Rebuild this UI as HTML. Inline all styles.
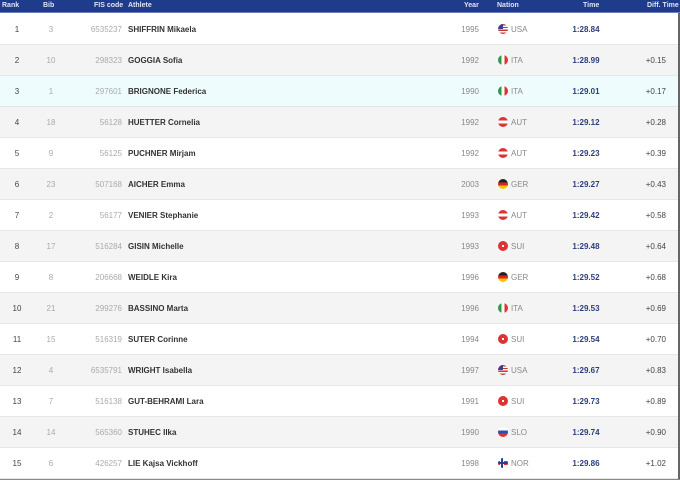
<!DOCTYPE html>
<html><head><meta charset="utf-8"><style>
*{margin:0;padding:0;box-sizing:border-box}
body{width:680px;height:480px;overflow:hidden;background:#fff;font-family:"Liberation Sans",Arial,sans-serif;font-size:8px;position:relative}
.hd{position:absolute;left:0;top:0;width:680px;height:13px;background:#1f3b8c;color:#dfe6f5;font-weight:bold;font-size:7px;border-bottom:1px solid #6b7fb8}
.hd span,.r span{position:absolute;top:0;white-space:nowrap}
.hd span{line-height:11px}
.r{position:absolute;left:0;width:679px;height:31px;border-bottom:1px solid #e6e6e6}
.r span{line-height:31px}
.r:nth-of-type(odd){background:#f4f4f4}
.rk{left:0;width:34px;text-align:center;color:#444}
.bib{left:36px;width:30px;text-align:center;color:#aaa}
.fis{right:557px;color:#aaa}
.ath{left:128px;color:#333;font-weight:bold}
.yr{right:200px;color:#888}
.fl{left:498px;top:10px!important;width:10px;height:10px;border-radius:50%;overflow:hidden;display:block}
.nat{left:511px;color:#888}
.tm{left:560px;width:52px;text-align:center;color:#2a3f7a;font-weight:bold}
.df{right:13px;color:#444}
.edge{position:absolute;right:0;top:13px;width:2px;height:467px;background:#666}
.edgeb{position:absolute;left:0;bottom:0;width:680px;height:1px;background:#888}
</style></head><body>
<div class="hd"><span style="left:2px">Rank</span><span style="left:43px">Bib</span><span style="left:94px">FIS code</span><span style="left:128px">Athlete</span><span style="left:464px">Year</span><span style="left:497px">Nation</span><span style="left:583px">Time</span><span style="left:647px">Diff. Time</span></div>

<div class="r" style="top:14px"><span class="rk">1</span><span class="bib">3</span><span class="fis">6535237</span><span class="ath">SHIFFRIN Mikaela</span><span class="yr">1995</span><span class="fl" style="background:repeating-linear-gradient(#c33 0 1.4px,#fff 1.4px 2.8px)"><i style="display:block;width:5px;height:5px;background:#3a3f8f"></i></span><span class="nat">USA</span><span class="tm">1:28.84</span><span class="df"></span></div>
<div class="r" style="top:45px"><span class="rk">2</span><span class="bib">10</span><span class="fis">298323</span><span class="ath">GOGGIA Sofia</span><span class="yr">1992</span><span class="fl" style="background:linear-gradient(90deg,#2a9a4a 33%,#fff 33% 66%,#d33 66%)"></span><span class="nat">ITA</span><span class="tm">1:28.99</span><span class="df">+0.15</span></div>
<div class="r" style="top:76px;background:#effcfd"><span class="rk">3</span><span class="bib">1</span><span class="fis">297601</span><span class="ath">BRIGNONE Federica</span><span class="yr">1990</span><span class="fl" style="background:linear-gradient(90deg,#2a9a4a 33%,#fff 33% 66%,#d33 66%)"></span><span class="nat">ITA</span><span class="tm">1:29.01</span><span class="df">+0.17</span></div>
<div class="r" style="top:107px"><span class="rk">4</span><span class="bib">18</span><span class="fis">56128</span><span class="ath">HUETTER Cornelia</span><span class="yr">1992</span><span class="fl" style="background:linear-gradient(#d33 35%,#fff 35% 65%,#d33 65%)"></span><span class="nat">AUT</span><span class="tm">1:29.12</span><span class="df">+0.28</span></div>
<div class="r" style="top:138px"><span class="rk">5</span><span class="bib">9</span><span class="fis">56125</span><span class="ath">PUCHNER Mirjam</span><span class="yr">1992</span><span class="fl" style="background:linear-gradient(#d33 35%,#fff 35% 65%,#d33 65%)"></span><span class="nat">AUT</span><span class="tm">1:29.23</span><span class="df">+0.39</span></div>
<div class="r" style="top:169px"><span class="rk">6</span><span class="bib">23</span><span class="fis">507168</span><span class="ath">AICHER Emma</span><span class="yr">2003</span><span class="fl" style="background:linear-gradient(#222 33%,#d22 33% 66%,#f5c400 66%)"></span><span class="nat">GER</span><span class="tm">1:29.27</span><span class="df">+0.43</span></div>
<div class="r" style="top:200px"><span class="rk">7</span><span class="bib">2</span><span class="fis">56177</span><span class="ath">VENIER Stephanie</span><span class="yr">1993</span><span class="fl" style="background:linear-gradient(#d33 35%,#fff 35% 65%,#d33 65%)"></span><span class="nat">AUT</span><span class="tm">1:29.42</span><span class="df">+0.58</span></div>
<div class="r" style="top:231px"><span class="rk">8</span><span class="bib">17</span><span class="fis">516284</span><span class="ath">GISIN Michelle</span><span class="yr">1993</span><span class="fl" style="background:linear-gradient(#d33 42%,transparent 42% 58%,#d33 58%),linear-gradient(90deg,#d33 42%,#fff 42% 58%,#d33 58%)"></span><span class="nat">SUI</span><span class="tm">1:29.48</span><span class="df">+0.64</span></div>
<div class="r" style="top:262px"><span class="rk">9</span><span class="bib">8</span><span class="fis">206668</span><span class="ath">WEIDLE Kira</span><span class="yr">1996</span><span class="fl" style="background:linear-gradient(#222 33%,#d22 33% 66%,#f5c400 66%)"></span><span class="nat">GER</span><span class="tm">1:29.52</span><span class="df">+0.68</span></div>
<div class="r" style="top:293px"><span class="rk">10</span><span class="bib">21</span><span class="fis">299276</span><span class="ath">BASSINO Marta</span><span class="yr">1996</span><span class="fl" style="background:linear-gradient(90deg,#2a9a4a 33%,#fff 33% 66%,#d33 66%)"></span><span class="nat">ITA</span><span class="tm">1:29.53</span><span class="df">+0.69</span></div>
<div class="r" style="top:324px"><span class="rk">11</span><span class="bib">15</span><span class="fis">516319</span><span class="ath">SUTER Corinne</span><span class="yr">1994</span><span class="fl" style="background:linear-gradient(#d33 42%,transparent 42% 58%,#d33 58%),linear-gradient(90deg,#d33 42%,#fff 42% 58%,#d33 58%)"></span><span class="nat">SUI</span><span class="tm">1:29.54</span><span class="df">+0.70</span></div>
<div class="r" style="top:355px"><span class="rk">12</span><span class="bib">4</span><span class="fis">6535791</span><span class="ath">WRIGHT Isabella</span><span class="yr">1997</span><span class="fl" style="background:repeating-linear-gradient(#c33 0 1.4px,#fff 1.4px 2.8px)"><i style="display:block;width:5px;height:5px;background:#3a3f8f"></i></span><span class="nat">USA</span><span class="tm">1:29.67</span><span class="df">+0.83</span></div>
<div class="r" style="top:386px"><span class="rk">13</span><span class="bib">7</span><span class="fis">516138</span><span class="ath">GUT-BEHRAMI Lara</span><span class="yr">1991</span><span class="fl" style="background:linear-gradient(#d33 42%,transparent 42% 58%,#d33 58%),linear-gradient(90deg,#d33 42%,#fff 42% 58%,#d33 58%)"></span><span class="nat">SUI</span><span class="tm">1:29.73</span><span class="df">+0.89</span></div>
<div class="r" style="top:417px"><span class="rk">14</span><span class="bib">14</span><span class="fis">565360</span><span class="ath">STUHEC Ilka</span><span class="yr">1990</span><span class="fl" style="background:linear-gradient(#fff 33%,#2a4fb0 33% 66%,#d33 66%)"></span><span class="nat">SLO</span><span class="tm">1:29.74</span><span class="df">+0.90</span></div>
<div class="r" style="top:448px"><span class="rk">15</span><span class="bib">6</span><span class="fis">426257</span><span class="ath">LIE Kajsa Vickhoff</span><span class="yr">1998</span><span class="fl" style="background:linear-gradient(transparent 40%,#2a3f8f 40% 60%,transparent 60%),linear-gradient(90deg,transparent 30%,#2a3f8f 30% 50%,transparent 50%),linear-gradient(#fff 30%,transparent 30% 70%,#fff 70%),linear-gradient(90deg,#d33 20%,#fff 20% 60%,#d33 60%)"></span><span class="nat">NOR</span><span class="tm">1:29.86</span><span class="df">+1.02</span></div>
<div class="edge"></div><div class="edgeb"></div>
</body></html>
